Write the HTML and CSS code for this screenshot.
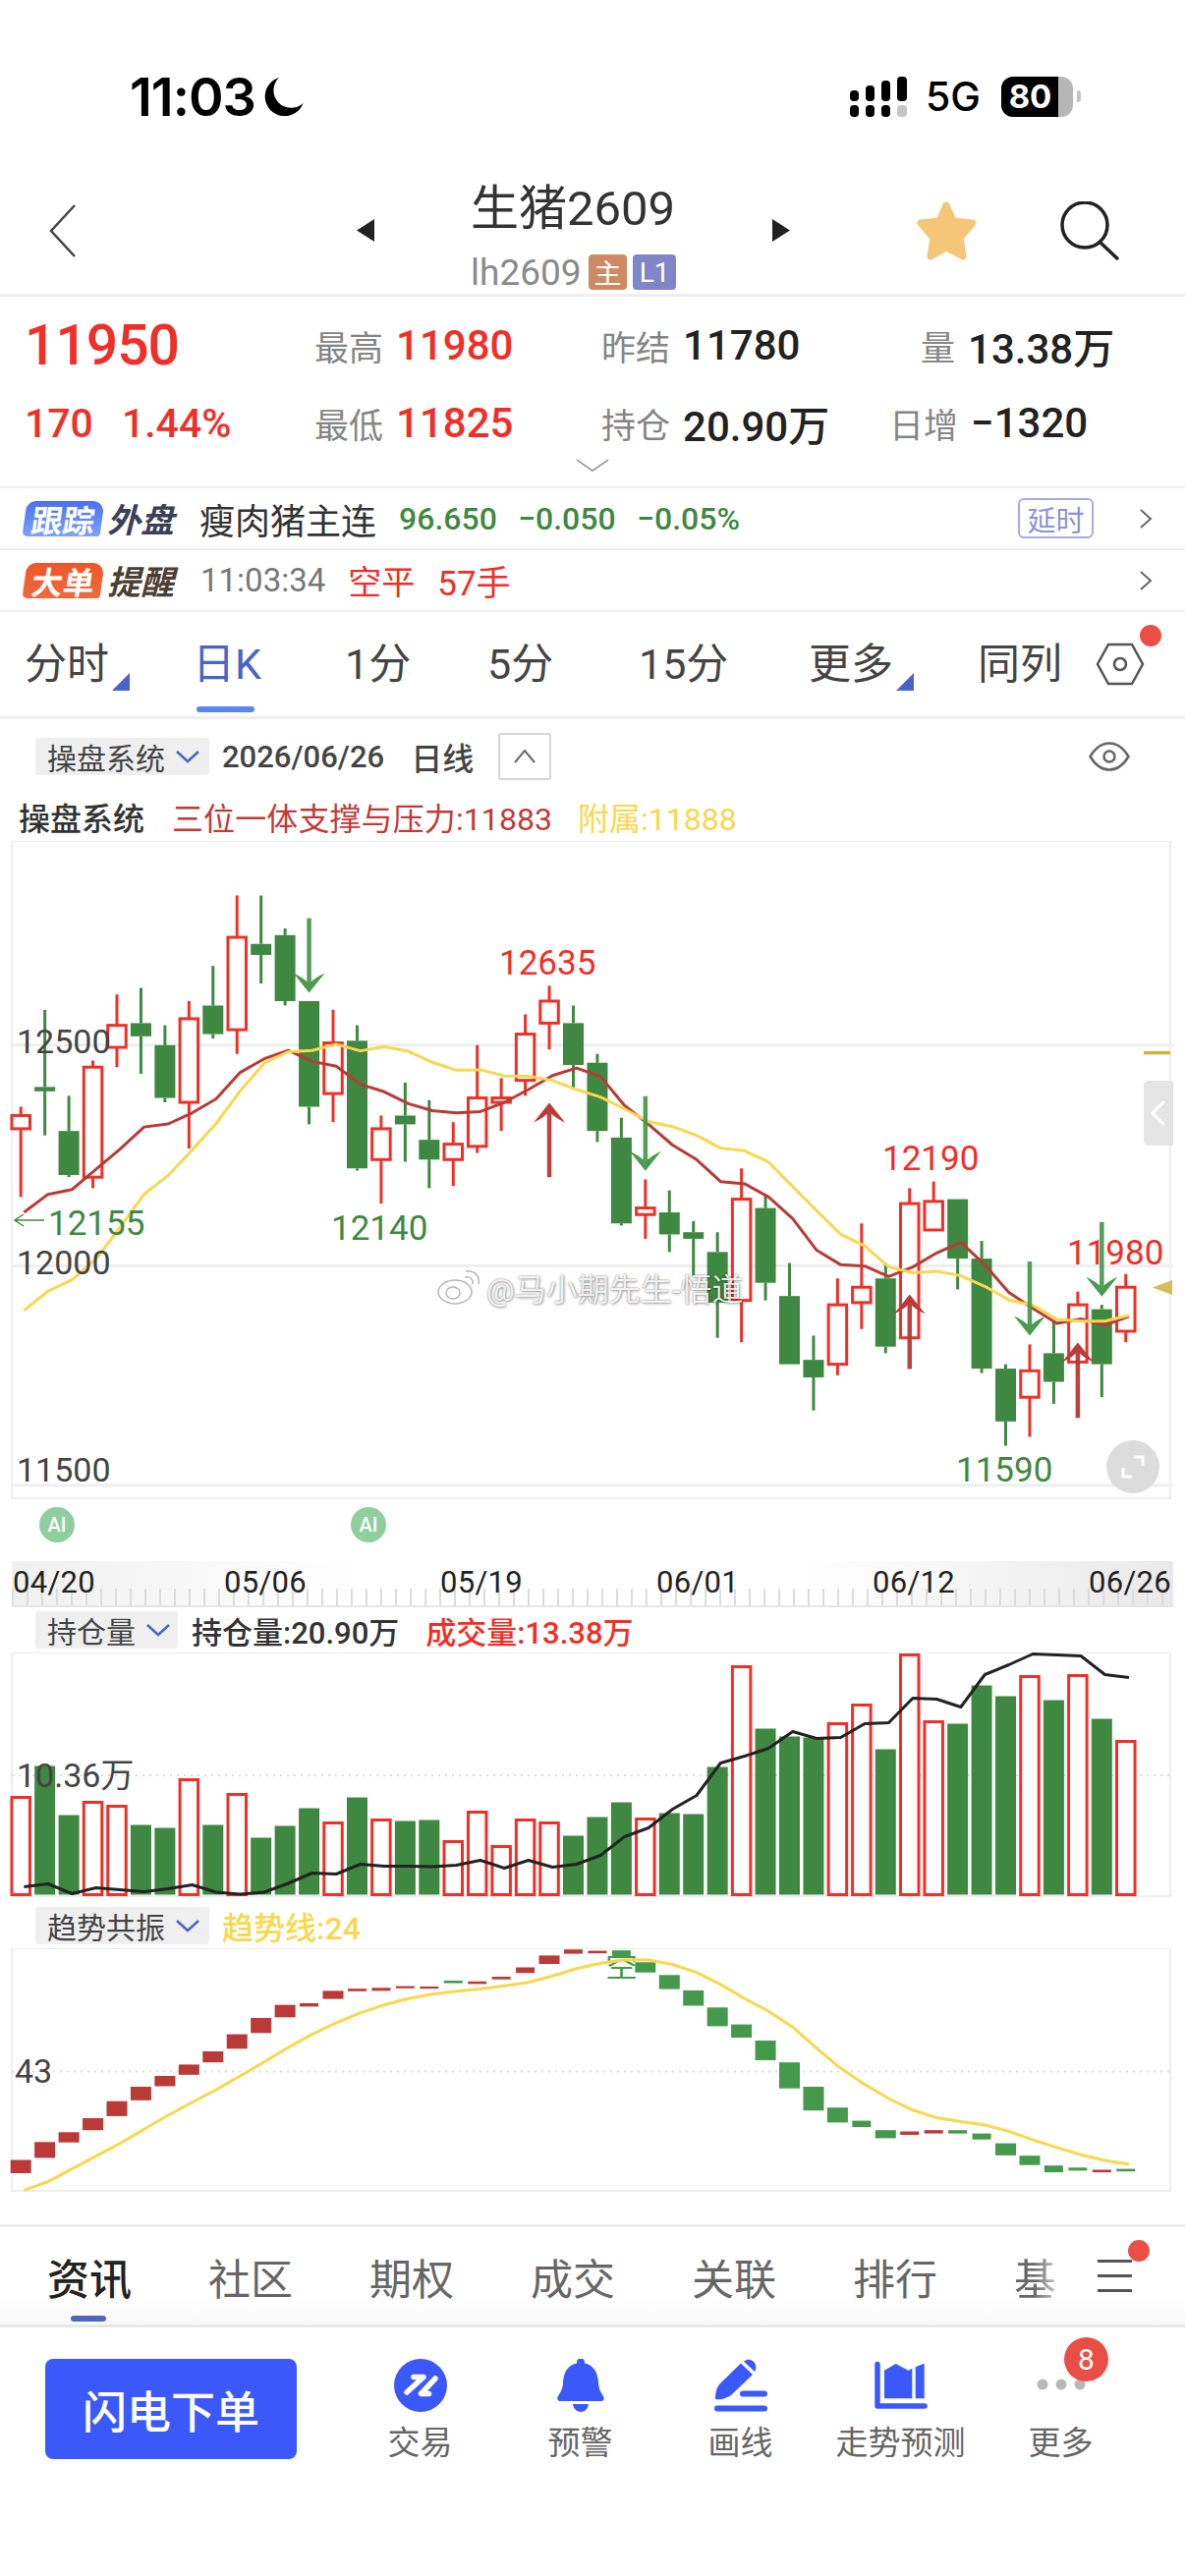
FILE: index.html
```html
<!DOCTYPE html>
<html lang="zh-CN">
<head>
  <meta charset="UTF-8">
  <title>生猪2609</title>
  <link rel="stylesheet" href="styles.css">
</head>
<body>
  <!-- 状态栏 -->
  <div class="status">
    <span class="time">11:03</span>
    <svg class="moon" width="40" height="40" viewBox="0 0 40 40"><path d="M15 1A20 20 0 1 0 39.500 27A17.500 17.500 0 0 1 15 1Z"/></svg>
    <div class="status-right">
      <svg width="58" height="41" viewBox="0 0 58 41">
        <rect x="0" y="14" width="9" height="11" rx="4"/><rect x="16" y="9" width="9" height="16" rx="4"/><rect x="32" y="4" width="9" height="21" rx="4"/><rect x="48" y="0" width="10" height="25" rx="4"/>
        <rect x="0" y="29" width="9" height="12" rx="4"/><rect x="16" y="29" width="9" height="12" rx="4"/><rect x="32" y="29" width="9" height="12" rx="4"/><rect x="48" y="29" width="10" height="12" rx="4" fill="#c4c4c4"/>
      </svg>
      <span class="net">5G</span>
      <div class="battery">80</div>
      <div class="battery-nub"></div>
    </div>
  </div>

  <!-- 标题栏 -->
  <div class="nav">
    <svg class="back" width="28" height="56" viewBox="0 0 28 56"><path d="M26 2L2 28L26 54"/></svg>
    <div class="tri tri-left"></div>
    <div class="title-block">
      <div class="title">生猪2609</div>
      <div class="sub">lh2609<span class="chip chip-main">主</span><span class="chip chip-l1">L1</span></div>
    </div>
    <div class="tri tri-right"></div>
    <svg class="star" width="61" height="60" viewBox="0 0 61 60"><path d="M30 4L37 20L57 22L44 37L47 56L30 47L14 56L17 37L4 22L23 20Z"/></svg>
    <svg class="search" width="62" height="60" viewBox="0 0 62 60"><circle cx="26" cy="24" r="23"/><path d="M41 41L60 59"/></svg>
  </div>

  <!-- 行情 -->
  <div class="quote">
    <div class="quote-grid">
      <div class="last red">11950</div>
      <div class="q"><span class="q-k">最高</span><span class="q-v red">11980</span></div>
      <div class="q"><span class="q-k">昨结</span><span class="q-v">11780</span></div>
      <div class="q q-vol"><span class="q-k">量</span><span class="q-v">13.38万</span></div>
      <div class="chg red"><span>170</span><span>1.44%</span></div>
      <div class="q"><span class="q-k">最低</span><span class="q-v red">11825</span></div>
      <div class="q"><span class="q-k">持仓</span><span class="q-v">20.90万</span></div>
      <div class="q"><span class="q-k">日增</span><span class="q-v">−1320</span></div>
    </div>
    <svg class="more-down" width="34" height="13" viewBox="0 0 34 13"><path d="M1 1L17 12L33 1"/></svg>
  </div>

  <div class="info-row">
    <span class="tag tag-blue">跟踪</span><span class="tag-word tag-word-blue">外盘</span>
    <span class="info-name">瘦肉猪主连</span>
    <span class="info-num green">96.650</span><span class="info-num green">−0.050</span><span class="info-num green">−0.05%</span>
    <span class="delay">延时</span>
    <svg class="row-arrow" width="14" height="20" viewBox="0 0 14 20"><path d="M2 1L12 10L2 19"/></svg>
  </div>
  <div class="info-row">
    <span class="tag tag-orange">大单</span><span class="tag-word tag-word-brown">提醒</span>
    <span class="info-time">11:03:34</span>
    <span class="info-red">空平</span><span class="info-red info-hand">57手</span>
    <svg class="row-arrow row-arrow-end" width="14" height="20" viewBox="0 0 14 20"><path d="M2 1L12 10L2 19"/></svg>
  </div>

  <!-- 周期 -->
  <div class="tabs">
    <span class="tab corner">分时</span>
    <span class="tab active">日K</span>
    <span class="tab">1分</span>
    <span class="tab">5分</span>
    <span class="tab">15分</span>
    <span class="tab corner">更多</span>
    <span class="tab">同列</span>
    <span class="hex">
      <svg width="50" height="44" viewBox="0 0 50 44"><path d="M13 2H37L48 22L37 42H13L2 22Z"/><circle cx="25" cy="22" r="6"/></svg>
      <i class="dot"></i>
    </span>
  </div>

  <!-- 主图 -->
  <div class="ind-bar ind-main">
    <span class="picker">操盘系统<svg class="caret" width="26" height="14" viewBox="0 0 26 14"><path d="M2 2L13 12L24 2"/></svg></span>
    <span class="bar-date">2026/06/26</span>
    <span class="bar-period">日线</span>
    <span class="fold"><svg width="24" height="16" viewBox="0 0 24 16"><path d="M2 14L12 2L22 14"/></svg></span>
    <svg class="eye" width="42" height="30" viewBox="0 0 42 30"><path d="M1.500 15C8 4 15 1.500 21 1.500S34 4 40.500 15C34 26 27 28.500 21 28.500S8 26 1.500 15Z"/><circle cx="21" cy="15" r="5.500"/></svg>
  </div>
  <div class="legend">
    <span class="legend-name">操盘系统</span>
    <span class="legend-ma">三位一体支撑与压力:11883</span>
    <span class="legend-sub">附属:11888</span>
  </div>

  <div class="kline-wrap">
    <svg id="kline" class="chart" width="1206" height="733" viewBox="0 856 1206 733"></svg>
    <div class="watermark">
      <svg width="44" height="36" viewBox="0 0 44 36"><ellipse cx="18" cy="23" rx="17" ry="12"/><ellipse cx="16" cy="24" rx="7" ry="6"/><path d="M28 8C33 7 37 10 36 15M29 2C38 0 44 8 42 15"/></svg>
      <span>@马小期先生-悟道</span>
    </div>
    <div class="side-tab"><svg width="16" height="28" viewBox="0 0 16 28"><path d="M14 2L2 14L14 26"/></svg></div>
    <div class="expand"><svg width="26" height="26" viewBox="0 0 26 26"><path d="M14 3H23V12M3 14V23H12"/></svg></div>
    <span class="ai ai-a">AI</span>
    <span class="ai ai-b">AI</span>
  </div>

  <div class="axis">
    <span>04/20</span><span>05/06</span><span>05/19</span><span>06/01</span><span>06/12</span><span>06/26</span>
  </div>

  <!-- 持仓量 -->
  <div class="ind-bar ind-vol">
    <span class="picker picker-vol">持仓量<svg class="caret" width="26" height="14" viewBox="0 0 26 14"><path d="M2 2L13 12L24 2"/></svg></span>
    <span class="vol-oi">持仓量:20.90万</span>
    <span class="vol-turn">成交量:13.38万</span>
  </div>
  <svg id="volume" class="chart" width="1206" height="250" viewBox="0 1682 1206 250"></svg>

  <!-- 趋势共振 -->
  <div class="ind-bar ind-trend">
    <span class="picker">趋势共振<svg class="caret" width="26" height="14" viewBox="0 0 26 14"><path d="M2 2L13 12L24 2"/></svg></span>
    <span class="trend-line">趋势线:24</span>
  </div>
  <svg id="trend" class="chart" width="1206" height="250" viewBox="0 1983 1206 250"></svg>

  <!-- 资讯 -->
  <div class="subtabs">
    <span class="subtab active">资讯</span>
    <span class="subtab">社区</span>
    <span class="subtab">期权</span>
    <span class="subtab">成交</span>
    <span class="subtab">关联</span>
    <span class="subtab">排行</span>
    <span class="subtab fade">基</span>
    <span class="menu"><i></i><i></i><i></i><b class="dot"></b></span>
  </div>

  <!-- 底部 -->
  <div class="dock">
    <div class="order">闪电下单</div>
    <div class="dock-item">
      <svg width="54" height="54" viewBox="0 0 54 54"><circle class="ico" cx="27" cy="27" r="27"/><path class="ico-line" d="M20 18.500H30L13 34M42 20L27.500 35.500H35.500"/></svg>
      <span>交易</span>
    </div>
    <div class="dock-item">
      <svg width="50" height="54" viewBox="0 0 50 54"><circle class="ico" cx="25" cy="3.500" r="4"/><path class="ico" d="M25 4C13 4 7.500 13 7 24C6.800 30 5 33 2 38C0.500 41 2 43 4 43H46C48 43 49.500 41 48 38C45 33 43.200 30 43 24C42.500 13 37 4 25 4Z"/><path class="ico" d="M17 46H33C32.500 51 28.500 54 25 54C21.500 54 17.500 51 17 46Z"/></svg>
      <span>预警</span>
    </div>
    <div class="dock-item">
      <svg width="54" height="54" viewBox="0 0 54 54"><path class="ico" d="M1 41C1 33 3 28 6 25L27 4.500L39 16L18 36C14 40 6 42 1 41Z"/><path class="ico" d="M30 2.500C33 0 37 0 39.500 2.500C43 5.500 43 10 41 13Z"/><path class="ico-bar" d="M29 35.500H51M3 50.500H51"/></svg>
      <span>画线</span>
    </div>
    <div class="dock-item">
      <svg width="54" height="54" viewBox="0 -3 54 54"><path class="ico-axis" d="M3 2.500V45H51"/><path class="ico" d="M10 8.700L21.700 2L34.300 8.700L38.300 6.700V37.300H10Z"/><path class="ico" d="M41.700 5.300L50.700 1.700V37.300H41.700Z"/></svg>
      <span>走势预测</span>
    </div>
    <div class="dock-item">
      <svg class="dots" width="54" height="54" viewBox="0 0 54 54"><circle cx="8" cy="26" r="5.500"/><circle cx="27" cy="26" r="5.500"/><circle cx="46" cy="26" r="5.500"/></svg>
      <span>更多</span>
      <b class="count">8</b>
    </div>
  </div>

  <script src="script.js"></script>
</body>
</html>
```
FILE: styles.css
```css
* {
  box-sizing: border-box;
}

body {
  margin: 0;
  width: 1206px;
  height: 2622px;
  overflow: hidden;
  background: #fff;
  color: #222;
  font-family: Roboto, "Noto Sans CJK SC", sans-serif;
}

.red { color: #ee3029; }
.green { color: #3f8841; }

/* 状态栏 */
.status {
  display: flex;
  align-items: center;
  height: 170px;
  padding: 26px 0 0 132px;
}

.time {
  font-family: Inter, sans-serif;
  font-weight: 600;
  font-size: 54px;
  letter-spacing: -1px;
  color: #000;
}

.moon { margin-left: 9px; }

.status-right {
  display: flex;
  align-items: center;
  margin-left: auto;
  padding-right: 106px;
}

.net {
  margin-left: 19px;
  font-family: Inter, sans-serif;
  font-weight: 500;
  font-size: 41px;
  color: #000;
}

.battery {
  display: flex;
  align-items: center;
  justify-content: center;
  width: 73px;
  height: 41px;
  margin-left: 21px;
  padding-right: 14px;
  border-radius: 12px;
  background: linear-gradient(90deg, #000 79%, #b6b6b6 79%);
  color: #fff;
  font-family: Inter, sans-serif;
  font-weight: 700;
  font-size: 33px;
}

.battery-nub {
  width: 4px;
  height: 12px;
  margin-left: 4px;
  border-radius: 0 3px 3px 0;
  background: #c4c4c4;
}

/* 标题栏 */
.nav {
  display: flex;
  align-items: center;
  height: 132px;
  padding-left: 50px;
  border-bottom: 3px solid #eee;
}

.back { fill: none; stroke: #444; stroke-width: 2.5; }

.tri {
  width: 18px;
  height: 23px;
  background: #222;
}
.tri-left { margin-left: 285px; clip-path: polygon(100% 0, 100% 100%, 0 50%); }
.tri-right { clip-path: polygon(0 0, 100% 50%, 0 100%); }

.title-block {
  align-self: flex-end;
  width: 209px;
  margin: 0 98px 4px;
}

.title {
  height: 42px;
  line-height: 42px;
  font-size: 49px;
  color: #333;
  white-space: nowrap;
}

.sub {
  display: flex;
  align-items: center;
  height: 36px;
  margin-top: 25px;
  font-size: 37px;
  color: #8a8a8a;
}

.chip {
  display: flex;
  align-items: center;
  justify-content: center;
  height: 36px;
  border-radius: 4px;
  color: #fff;
  font-size: 28px;
}
.chip-main { width: 40px; margin-left: 7px; background: #ce8b63; }
.chip-l1 { width: 44px; margin-left: 6px; background: #8085c8; }

.star { margin-left: 129px; fill: #f5c578; stroke: #f5c578; stroke-width: 7; stroke-linejoin: round; }
.search { margin-left: 84px; fill: none; stroke: #222; stroke-width: 3.5; }

/* 行情 */
.quote {
  height: 195px;
  padding-top: 10px;
  border-bottom: 2px solid #eee;
}

.quote-grid {
  display: grid;
  grid-template-columns: 295px 292px 293px 1fr;
  grid-auto-rows: 79px;
  padding-left: 25px;
  align-items: center;
}

.last {
  font-weight: 500;
  font-size: 57px;
  letter-spacing: -1px;
}

.chg {
  display: flex;
  gap: 29px;
  font-weight: 500;
  font-size: 41px;
}

.q {
  display: flex;
  align-items: center;
  gap: 13px;
  white-space: nowrap;
}
.q-vol { margin-left: 32px; }

.q-k {
  font-size: 35px;
  color: #858585;
}

.q-v {
  font-weight: 500;
  font-size: 42px;
}

.more-down {
  display: block;
  margin: -3px auto 0;
  fill: none;
  stroke: #888;
  stroke-width: 1.5;
}

/* 外盘、大单 */
.info-row {
  display: flex;
  align-items: center;
  height: 63px;
  padding-left: 25px;
  border-bottom: 2px solid #eee;
}

.tag {
  display: flex;
  align-items: center;
  justify-content: center;
  width: 79px;
  height: 36px;
  border-radius: 9px 12px 3px 5px;
  transform: skewX(-8deg);
  color: #fff;
  font-weight: 700;
  font-size: 32px;
}
.tag-blue { background: linear-gradient(#4a70ef, #7ea2f7); }
.tag-orange { background: linear-gradient(#ee5628, #ee6a3e); }

.tag-word {
  width: 70px;
  margin-left: 5px;
  font-style: italic;
  font-weight: 700;
  font-size: 34px;
}
.tag-word-blue { color: #3b4058; }
.tag-word-brown { color: #4b3e36; }

.info-name {
  margin-left: 24px;
  width: 203px;
  font-size: 36px;
  color: #333;
}

.info-num {
  width: 121px;
  font-weight: 500;
  font-size: 32px;
}

.delay {
  display: flex;
  align-items: center;
  justify-content: center;
  width: 77px;
  height: 41px;
  margin-left: auto;
  border: 2px solid #a6abe0;
  border-radius: 6px;
  color: #8d92d0;
  font-size: 29px;
}

.row-arrow {
  margin: 0 33px 0 46px;
  fill: none;
  stroke: #666;
  stroke-width: 2;
}
.row-arrow-end { margin-left: auto; }

.info-time {
  margin-left: 25px;
  font-size: 33px;
  color: #777;
}

.info-red {
  margin-left: 23px;
  font-size: 34px;
  color: #ee3029;
}
.info-hand { margin-left: 23px; font-size: 35px; }

/* 周期 */
.tabs {
  position: relative;
  display: grid;
  grid-template-columns: 171px 155px 145px 154px 173px 172px 120px 1fr;
  align-items: center;
  height: 109px;
  padding-left: 25px;
  border-bottom: 3px solid #eee;
}

.tab {
  position: relative;
  justify-self: start;
  font-size: 43px;
  line-height: 50px;
  color: #444;
}

.tab.active { color: #4a63c8; }
.tab.active::after {
  content: "";
  position: absolute;
  left: 4px;
  right: 7px;
  bottom: -24px;
  height: 6px;
  border-radius: 3px;
  background: #5b85ee;
}

.tab.corner::after {
  content: "";
  position: absolute;
  left: 100%;
  bottom: -2px;
  width: 18px;
  height: 18px;
  margin-left: 3px;
  background: #4a63c8;
  clip-path: polygon(100% 0, 100% 100%, 0 100%);
}

.hex {
  position: relative;
  display: block;
  fill: none;
  stroke: #555;
  stroke-width: 2.5;
}
.hex svg { display: block; }

.dot {
  position: absolute;
  width: 22px;
  height: 22px;
  border-radius: 50%;
  background: #ea4f45;
}
.hex .dot { left: 45px; top: -18px; }

/* 指标栏 */
.ind-bar {
  display: flex;
  align-items: center;
}

.ind-main { height: 76px; padding-left: 36px; }
.ind-vol { height: 46px; padding-left: 36px; }
.ind-trend { height: 51px; padding: 5px 0 0 36px; }

.picker {
  display: flex;
  align-items: center;
  height: 38px;
  padding-left: 12px;
  border-radius: 3px;
  background: #efefef;
  color: #444;
  font-size: 30px;
  width: 177px;
}
.picker-vol { width: 145px; }

.caret {
  margin-left: 10px;
  fill: none;
  stroke: #4a63c8;
  stroke-width: 2.5;
}

.bar-date {
  margin-left: 13px;
  font-weight: 500;
  font-size: 31px;
  color: #444;
}

.bar-period {
  margin-left: 27px;
  font-weight: 500;
  font-size: 32px;
  color: #444;
}

.fold {
  display: flex;
  align-items: center;
  justify-content: center;
  width: 54px;
  height: 48px;
  margin-left: 25px;
  border: 2px solid #d6d6d6;
  border-radius: 2px;
  fill: none;
  stroke: #666;
  stroke-width: 2;
}

.eye {
  margin-left: auto;
  margin-right: 56px;
  fill: none;
  stroke: #666;
  stroke-width: 2.5;
}

.legend {
  display: flex;
  align-items: center;
  height: 46px;
  margin-bottom: 2px;
  padding-left: 19px;
  font-size: 32px;
  font-weight: 500;
}
.legend-name { width: 156px; color: #333; }
.legend-ma { width: 413px; color: #bd3c38; font-weight: 400; letter-spacing: 0.1px; }
.legend-sub { color: #f9d74e; font-weight: 400; }

/* 图表 */
.chart { display: block; }

.kline-wrap { position: relative; height: 733px; }

.axis-label { font-size: 34px; fill: #444; }
.peak-red { font-size: 35px; fill: #ee3029; }
.peak-green { font-size: 35px; fill: #3f8841; }
.short-mark { font-size: 30px; fill: #45994c; }

.watermark {
  position: absolute;
  left: 445px;
  top: 431px;
  display: flex;
  align-items: center;
  gap: 6px;
  color: rgba(255, 255, 255, 0.88);
  font-size: 32px;
  text-shadow: 0 0 2px rgba(0, 0, 0, 0.45), 1px 1px 3px rgba(0, 0, 0, 0.3);
  white-space: nowrap;
}
.watermark svg {
  fill: rgba(255, 255, 255, 0.7);
  stroke: rgba(120, 120, 120, 0.55);
  stroke-width: 1.5;
}

.side-tab {
  position: absolute;
  left: 1164px;
  top: 244px;
  display: flex;
  align-items: center;
  justify-content: center;
  width: 30px;
  height: 66px;
  border-radius: 5px 0 0 5px;
  background: #e4e4e4;
  fill: none;
  stroke: #fff;
  stroke-width: 3;
}

.expand {
  position: absolute;
  left: 1126px;
  top: 610px;
  display: flex;
  align-items: center;
  justify-content: center;
  width: 54px;
  height: 54px;
  border-radius: 50%;
  background: #dcdcdc;
  fill: none;
  stroke: #fff;
  stroke-width: 3;
}

.ai {
  position: absolute;
  top: 678px;
  display: flex;
  align-items: center;
  justify-content: center;
  width: 36px;
  height: 36px;
  border-radius: 50%;
  background: #8fcf9e;
  color: #fff;
  font-weight: 500;
  font-size: 20px;
}
.ai-a { left: 40px; }
.ai-b { left: 357px; }

.axis {
  display: flex;
  height: 47px;
  margin: 0 12px;
  padding: 3px 0 0 1px;
  border-bottom: 2px solid #e6e6e6;
  background:
    repeating-linear-gradient(90deg, #dcdcdc 0 2px, transparent 2px 15px) 0 100% / 100% 17px no-repeat,
    linear-gradient(90deg, #f0f0f0, #fff 30%, #fff 68%, #e9e9e9);
  font-size: 31px;
  letter-spacing: 0.3px;
  color: #222;
}
.axis span { width: 220px; flex-shrink: 0; }
.axis span:first-child { width: 215px; }
.axis span:last-child { width: 80px; white-space: nowrap; }

.vol-oi {
  margin-left: 14px;
  font-weight: 500;
  font-size: 31px;
  color: #333;
}

.vol-turn {
  margin-left: 27px;
  font-weight: 500;
  font-size: 31px;
  color: #ee3029;
}

.trend-line {
  margin-left: 13px;
  font-weight: 500;
  font-size: 32px;
  color: #f9d74e;
}

/* 资讯 */
.subtabs {
  position: relative;
  display: flex;
  align-items: center;
  height: 105px;
  margin-top: 31px;
  padding-left: 48px;
  border-top: 3px solid #eee;
  border-bottom: 3px solid #e8e8e8;
  background: linear-gradient(#fff 70%, #f8f8f8);
}

.subtab {
  position: relative;
  width: 164px;
  flex-shrink: 0;
  font-size: 43px;
  color: #666;
}

.subtab.active { color: #222; font-weight: 500; }
.subtab.active::after {
  content: "";
  position: absolute;
  left: 24px;
  bottom: -15px;
  width: 36px;
  height: 6px;
  border-radius: 3px;
  background: #4f65bf;
}

.subtab.fade {
  width: 56px;
  white-space: nowrap;
  -webkit-mask-image: linear-gradient(90deg, #000 35%, transparent);
  mask-image: linear-gradient(90deg, #000 35%, transparent);
}

.menu {
  position: relative;
  display: flex;
  flex-direction: column;
  gap: 12px;
  width: 35px;
  margin-left: 29px;
}
.menu i {
  display: block;
  height: 3px;
  background: #555;
}
.menu .dot { left: 31px; top: -20px; }

/* 底部 */
.dock {
  display: flex;
  align-items: flex-start;
  padding: 32px 0 0 46px;
}

.order {
  display: flex;
  align-items: center;
  justify-content: center;
  width: 256px;
  height: 102px;
  margin-right: 44px;
  border-radius: 8px;
  background: #3b59fa;
  color: #fff;
  font-weight: 500;
  font-size: 45px;
}

.dock-item {
  position: relative;
  display: flex;
  flex-direction: column;
  align-items: center;
  width: 163px;
  color: #666;
  font-size: 33px;
}
.dock-item span { margin-top: 9px; line-height: 46px; }

.ico { fill: #3b59fa; }
.ico-line { fill: none; stroke: #fff; stroke-width: 5.500; stroke-linecap: round; stroke-linejoin: round; }
.ico-bar { fill: none; stroke: #3b59fa; stroke-width: 6; stroke-linecap: round; }
.ico-axis { fill: none; stroke: #3b59fa; stroke-width: 5.500; stroke-linecap: round; stroke-linejoin: round; }
.dots { fill: #b8b8b8; }

.count {
  position: absolute;
  left: 85px;
  top: -22px;
  display: flex;
  align-items: center;
  justify-content: center;
  width: 45px;
  height: 45px;
  border-radius: 50%;
  background: #e84e45;
  color: #fff;
  font-weight: 400;
  font-size: 30px;
}
```
FILE: script.js
```js
const NS = "http://www.w3.org/2000/svg";
const RED = "#ee3029", GREEN = "#3f8841", MA_RED = "#b93a36", YELLOW = "#f9d74e";

// 开 高 低 收
const candles = [
  [12310,12360,12155,12340],[12405,12580,12295,12395],[12305,12385,12200,12205],[12200,12465,12175,12450],
  [12495,12615,12450,12545],[12550,12630,12435,12520],[12500,12545,12370,12380],[12370,12600,12265,12560],
  [12590,12680,12515,12525],[12535,12840,12480,12745],[12730,12840,12640,12705],[12750,12765,12590,12600],
  [12600,12600,12320,12360],[12390,12580,12325,12505],[12510,12545,12215,12220],[12240,12340,12140,12310],
  [12340,12415,12235,12320],[12285,12375,12175,12240],[12240,12325,12180,12275],[12270,12500,12255,12380],
  [12370,12425,12305,12380],[12420,12570,12385,12525],[12550,12635,12490,12600],[12550,12590,12400,12455],
  [12460,12480,12280,12305],[12290,12335,12090,12095],[12115,12195,12060,12130],[12120,12170,12030,12070],
  [12075,12100,11975,12060],[12030,12075,11835,11915],[11920,12220,11825,12150],[12130,12160,11920,11960],
  [11930,12005,11775,11775],[11785,11840,11670,11745],[11775,11970,11750,11910],[11915,12095,11855,11950],
  [11970,12005,11800,11815],[11835,12175,11835,12140],[12080,12190,12080,12145],[12150,12150,11945,12015],
  [12015,12055,11755,11765],[11765,11775,11590,11645],[11700,11820,11610,11760],[11800,11875,11685,11735],
  [11780,11940,11780,11910],[11900,11910,11700,11775],[11850,11980,11825,11950]
];

const maRed = [12120,12161,12172,12218,12264,12314,12321,12346,12378,12438,12469,12488,12463,12452,12411,12394,
  12367,12351,12346,12349,12370,12399,12431,12448,12429,12363,12320,12273,12240,12190,12185,12155,12106,12034,
  12001,11998,11974,11996,12028,12052,12001,11938,11902,11868,11878,11864,11884];
const maYellow = [11897,11941,11967,12014,12086,12161,12204,12262,12322,12396,12459,12485,12488,12502,12487,12496,
  12486,12461,12443,12444,12430,12429,12420,12399,12382,12355,12326,12315,12295,12266,12260,12234,12179,12124,
  12070,12044,11996,11983,11986,11976,11952,11921,11909,11877,11873,11873,11886];

// 成交量柱高、持仓线高度(px)
const volumes = [100,132,82,95,91,72,69,118,72,103,59,71,89,74,100,77,76,77,55,85,50,77,74,61,80,95,78,84,83,131,
  233,170,162,161,175,194,149,245,177,175,214,203,223,199,224,180,157];
const holding = [9,12,2,8,6,4,7,11,3.5,1.5,3.5,12.5,23,22,32,30,30,29.5,31,36,28,36,29,32,41,60,69,88,102,135,142,
  150,167,160,161,175,176,201,200,192,225,235,246,245,244,225,222];

// 趋势方块(上沿、下沿,距顶部 px)
const trendBoxes = [[215.5,229],[197.3,213.4],[187.3,197.7],[173,185.2],[155.7,170.9],[141,154.8],[130,140.5],[118.4,128.8],
  [105,116.2],[87.6,102.3],[71,86.3],[57.7,70.3],[56,59.4],[43.4,51.6],[41.2,43.8],[40.3,43.4],[38.6,40.8],[39,41.2],
  [33,35.6],[33.8,36.4],[29,31.7],[19.5,25.2],[7.4,16],[1.3,5.6],[2.6,5.2],[2.2,8.7],[14.3,24.7],[27.3,41.6],[43,58.5],
  [60.3,79.4],[77.6,91],[94,114],[116.2,142.7],[141,165.2],[162.2,177.4],[175.6,182.1],[185.2,193.4],[186.5,190],
  [185.2,188.6],[185.2,188.6],[188.6,194.7],[198.6,210.8],[211.2,220.7],[221.2,228.1],[223.3,226.4],[225.5,228.1],[224.6,227.2]];
const trendColors = "rrrrrrrrrrrrrrrrrrgrrrrrrggggggggggggrrggggggr";
const trendLine = [246.3,237.6,224.6,211.6,198.6,184.3,170,157,144,130,115.8,101,87.6,75.9,65.9,57.7,51.2,46.8,43.8,41.6,
  38.2,34.7,28.2,20.8,15.2,11.7,12.1,16.5,24.7,36.9,51.2,64.2,80.2,101.9,122.3,138.8,153,164.8,172.6,176.5,179.9,186.4,
  195.1,202.9,210.3,216,219.9];

const barX = i => 21.2 + i * 24.447;
const lineX = i => barX(i) + 3.2;
const priceY = p => 1063.8 + (12500 - p) * 0.448;

function add(svg, tag, attrs, text) {
  const el = document.createElementNS(NS, tag);
  for (const k in attrs) el.setAttribute(k, attrs[k]);
  if (text) el.textContent = text;
  svg.appendChild(el);
  return el;
}

function frame(svg, top, height) {
  add(svg, "rect", { x: 12, y: top, width: 1179, height: height, fill: "#fff", stroke: "#eee", "stroke-width": 2 });
}

function polyline(svg, points, color, width) {
  add(svg, "polyline", {
    points: points.map(p => p.join(",")).join(" "),
    fill: "none", stroke: color, "stroke-width": width, "stroke-linejoin": "round"
  });
}

function bar(svg, i, top, bottom, up, green, red) {
  const x = barX(i);
  if (up) {
    add(svg, "rect", { x: x - 9.25, y: top, width: 18.5, height: bottom - top, fill: "#fff", stroke: red, "stroke-width": 3 });
  } else {
    add(svg, "rect", { x: x - 10.5, y: top, width: 21, height: bottom - top, fill: green });
  }
}

function arrow(svg, i, tip, tail, dir) {
  const x = barX(i);
  const color = dir > 0 ? "#4a9a50" : "#b93a36";
  const back = tip - 20 * dir, mid = tip - 9 * dir, wing = tip - 15 * dir;
  add(svg, "line", { x1: x, x2: x, y1: tail, y2: mid, stroke: color, "stroke-width": 4.5, opacity: 0.95 });
  add(svg, "path", {
    d: `M${x - 16} ${back}L${x} ${tip}L${x + 16} ${back}Q${x + 5} ${wing} ${x} ${mid}Q${x - 5} ${wing} ${x - 16} ${back}Z`,
    fill: color
  });
}

function drawKline() {
  const svg = document.getElementById("kline");
  frame(svg, 856, 669);
  [1063.8, 1288.4, 1511.8].forEach(y => {
    add(svg, "line", { x1: 12, x2: 1194, y1: y, y2: y, stroke: "#eee", "stroke-width": 3 });
  });

  candles.forEach((c, i) => {
    const up = c[3] >= c[0];
    const x = barX(i);
    const top = priceY(Math.max(c[0], c[3])), bottom = priceY(Math.min(c[0], c[3]));
    const color = up ? RED : GREEN;
    add(svg, "line", { x1: x, x2: x, y1: priceY(c[1]), y2: top, stroke: color, "stroke-width": 3 });
    add(svg, "line", { x1: x, x2: x, y1: bottom, y2: priceY(c[2]), stroke: color, "stroke-width": 3 });
    bar(svg, i, top, bottom, up, GREEN, RED);
  });

  polyline(svg, maRed.map((p, i) => [lineX(i), priceY(p)]), MA_RED, 3);
  polyline(svg, maYellow.map((p, i) => [lineX(i), priceY(p)]), YELLOW, 3);

  arrow(svg, 12, 1010.5, 934.6, 1);
  arrow(svg, 26, 1191.7, 1115.8, 1);
  arrow(svg, 42, 1359.6, 1284, 1);
  arrow(svg, 45, 1319.7, 1243.8, 1);
  arrow(svg, 22, 1122.4, 1198.2, -1);
  arrow(svg, 37, 1317.5, 1393.4, -1);
  arrow(svg, 44, 1366.5, 1443.3, -1);

  add(svg, "text", { x: 17, y: 1072, class: "axis-label" }, "12500");
  add(svg, "text", { x: 17, y: 1297, class: "axis-label" }, "12000");
  add(svg, "text", { x: 17, y: 1508, class: "axis-label" }, "11500");
  add(svg, "text", { x: 508, y: 992, class: "peak-red" }, "12635");
  add(svg, "text", { x: 898, y: 1191, class: "peak-red" }, "12190");
  add(svg, "text", { x: 1086, y: 1287, class: "peak-red" }, "11980");
  add(svg, "text", { x: 337, y: 1262, class: "peak-green" }, "12140");
  add(svg, "text", { x: 973, y: 1508, class: "peak-green" }, "11590");
  add(svg, "text", { x: 49, y: 1257, class: "peak-green" }, "12155");
  add(svg, "path", { d: "M45 1242H15M24 1236L15 1242L24 1248", fill: "none", stroke: GREEN, "stroke-width": 1.5 });

  add(svg, "line", { x1: 1164, x2: 1191, y1: 1071.6, y2: 1071.6, stroke: "#cdb24a", "stroke-width": 3.5 });
  add(svg, "path", { d: "M1173 1310.500L1193 1303V1318Z", fill: "#d5bc55" });
}

function drawVolume() {
  const svg = document.getElementById("volume");
  const base = 1929.5;
  frame(svg, 1682, 248);
  add(svg, "line", { x1: 12, x2: 1191, y1: 1807, y2: 1807, stroke: "#ddd", "stroke-width": 2, "stroke-dasharray": "2 5" });
  volumes.forEach((h, i) => {
    bar(svg, i, base - h, base - 1, candles[i][3] >= candles[i][0], "#3f8841", RED);
  });
  polyline(svg, holding.map((h, i) => [lineX(i), base - h]), "#222", 3);
  add(svg, "text", { x: 17, y: 1819, class: "axis-label" }, "10.36万");
}

function drawTrend() {
  const svg = document.getElementById("trend");
  const top = 1983;
  frame(svg, top, 247);
  add(svg, "line", { x1: 12, x2: 1191, y1: 2108.6, y2: 2108.6, stroke: "#ddd", "stroke-width": 2, "stroke-dasharray": "2 5" });
  add(svg, "text", { x: 15, y: 2120, class: "axis-label" }, "43");
  trendBoxes.forEach((b, i) => {
    const up = trendColors[i] === "r";
    const w = b[1] - b[0] < 8 ? 19 : 21;
    add(svg, "rect", { x: barX(i) - w / 2, y: top + b[0], width: w, height: b[1] - b[0], fill: up ? MA_RED : "#45994c" });
  });
  add(svg, "text", { x: 616, y: 2012, class: "short-mark", textLength: 33, lengthAdjust: "spacingAndGlyphs" }, "空");
  polyline(svg, trendLine.map((v, i) => [lineX(i), top + v]), YELLOW, 3);
}

drawKline();
drawVolume();
drawTrend();
```
